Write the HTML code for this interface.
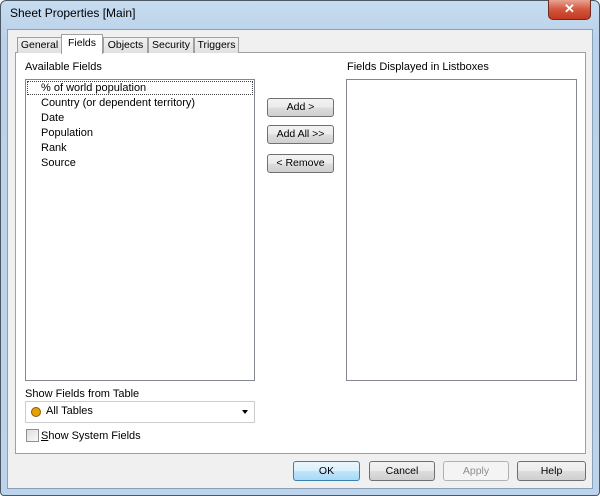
<!DOCTYPE html><html><head><style>
body{margin:0;width:600px;height:496px;overflow:hidden;font-family:"Liberation Sans",sans-serif;font-size:11px;color:#000;background:#fff}
.frame{position:absolute;left:0;top:0;width:598px;height:494px;border:1px solid #4a5866;border-radius:6px 6px 4px 4px;background:linear-gradient(#c6dcef,#b9d1ea 40px,#bcd3eb)}
.title{position:absolute;left:10px;top:6px;font-size:12px;color:#000}
.close{position:absolute;left:548px;top:0;width:41px;height:19px;border:1px solid #6d2a20;border-top:none;border-radius:0 0 5px 5px;background:linear-gradient(#e8a493,#d4553d 50%,#c2391f);color:#fff;font-weight:bold;text-align:center;font-size:13px;line-height:18px}
.client{position:absolute;left:7px;top:29px;width:584px;height:458px;background:#f0f0f0;border:1px solid #8aa0b6}
.a{position:absolute}
.tab{position:absolute;top:37px;height:15px;border:1px solid #a0a0a0;border-bottom:none;background:linear-gradient(#f2f2f2,#e0e0e0);text-align:center;line-height:15px;font-size:10.5px}
.panel{position:absolute;left:15px;top:52px;width:569px;height:400px;border:1px solid #a0a0a0;background:#fff}
.list{position:absolute;border:1px solid #828790;background:#fff}
.btn{position:absolute;border:1px solid #707070;border-radius:3px;background:linear-gradient(#f2f2f2,#ebebeb 50%,#dddddd 51%,#cfcfcf);text-align:center;box-sizing:border-box;font-size:10.5px}
</style></head><body>
<div class="frame"></div>
<div class="title">Sheet Properties [Main]</div>
<div class="close">✕</div>
<div class="client"></div>
<div class="panel"></div>
<div class="tab" style="left:17px;width:43px">General</div>
<div class="tab" style="left:61px;top:34px;height:19px;width:40px;background:#fff;line-height:17px">Fields</div>
<div class="tab" style="left:103px;width:43px">Objects</div>
<div class="tab" style="left:148px;width:44px">Security</div>
<div class="tab" style="left:194px;width:43px">Triggers</div>
<div class="a" style="left:25px;top:61px">Available Fields</div>
<div class="a" style="left:347px;top:61px">Fields Displayed in Listboxes</div>
<div class="list" style="left:25px;top:79px;width:228px;height:300px"></div>
<div class="a" style="left:27px;top:81px;width:224px;height:12px;border:1px dotted #444"></div>
<div class="a" style="left:41px;top:81px;line-height:15px">% of world population<br>Country (or dependent territory)<br>Date<br>Population<br>Rank<br>Source</div>
<div class="list" style="left:346px;top:79px;width:229px;height:300px"></div>
<div class="btn" style="left:267px;top:98px;width:67px;height:19px;line-height:17px">Add &gt;</div>
<div class="btn" style="left:267px;top:125px;width:67px;height:19px;line-height:17px">Add All &gt;&gt;</div>
<div class="btn" style="left:267px;top:154px;width:67px;height:19px;line-height:17px">&lt; Remove</div>
<div class="a" style="left:25px;top:388px">Show Fields from Table</div>
<div class="a" style="left:25px;top:401px;width:228px;height:20px;border:1px solid #ccc;background:#fff"></div>
<div class="a" style="left:31px;top:407px;width:8px;height:8px;border-radius:50%;background:#e8a000;border:1px solid #8a5a00"></div>
<div class="a" style="left:46px;top:405px">All Tables</div>
<div class="a" style="left:242px;top:410px;width:0;height:0;border-left:3px solid transparent;border-right:3px solid transparent;border-top:4px solid #000"></div>
<div class="a" style="left:26px;top:429px;width:11px;height:11px;border:1px solid #8e8f8f;background:linear-gradient(135deg,#ddd,#fafafa)"></div>
<div class="a" style="left:41px;top:430px"><u>S</u>how System Fields</div>
<div class="btn" style="left:293px;top:461px;width:67px;height:20px;line-height:18px;border-color:#3c7fb1;background:linear-gradient(#eaf6fd,#d9f0fc 50%,#bee6fd 51%,#a7d9f5)">OK</div>
<div class="btn" style="left:369px;top:461px;width:66px;height:20px;line-height:18px">Cancel</div>
<div class="btn" style="left:443px;top:461px;width:66px;height:20px;line-height:18px;color:#8d8d8d;border-color:#adb2b5;background:#f4f4f4">Apply</div>
<div class="btn" style="left:517px;top:461px;width:69px;height:20px;line-height:18px">Help</div>
</body></html>
